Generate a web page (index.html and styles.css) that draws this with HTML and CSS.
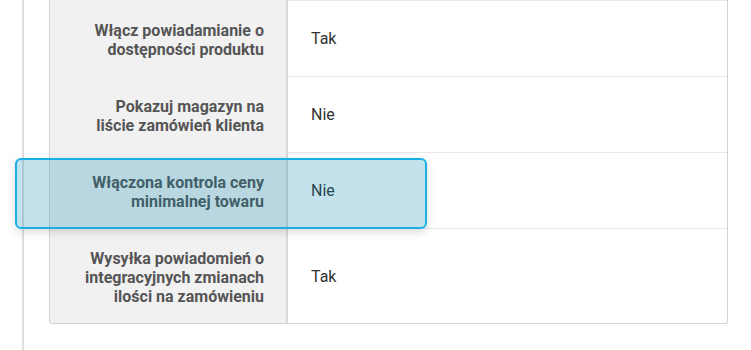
FILE: index.html
```html
<!DOCTYPE html>
<html lang="pl">

<head>
    <meta charset="UTF-8">
    <meta name="viewport" content="width=device-width, initial-scale=1.0">
    <title>Ustawienia sklepu</title>
    <link rel="stylesheet" href="styles.css">
</head>

<body>
    <div class="panel">
        <div class="settings">
            <div class="label">Włącz powiadamianie o dostępności produktu</div>
            <div class="value">Tak</div>

            <div class="label">Pokazuj magazyn na liście zamówień klienta</div>
            <div class="value">Nie</div>

            <div class="label">Włączona kontrola ceny minimalnej towaru</div>
            <div class="value">Nie</div>

            <div class="label">Wysyłka powiadomień o integracyjnych zmianach ilości na zamówieniu</div>
            <div class="value">Tak</div>
        </div>
    </div>
    <!-- podświetlenie wybranego wiersza -->
    <div class="highlight"></div>
</body>

</html>
```
FILE: styles.css
```css
* {
    margin: 0;
    padding: 0;
    box-sizing: border-box;
}

body {
    background: #fff;
    font-family: Roboto, "Liberation Sans", sans-serif;
    font-size: 16px;
}

.panel {
    margin-left: 22px;
    border-left: 2px solid #dedede;
    min-height: 100vh;
    padding-left: 25px;
}

.settings {
    width: 679px;
    display: grid;
    grid-template-columns: 238px 1fr;
    border: 1px solid #d4d4d4;
    border-top: none;
    border-radius: 0 0 3px 3px;
    overflow: hidden;
}

.label {
    background: #f1f1f1;
    border-right: 2px solid #d9d9d9;
    padding: 21px 22px 17px 28px;
    text-align: right;
    font-weight: bold;
    line-height: 19px;
    color: #555;
}

.value {
    display: flex;
    align-items: center;
    padding-left: 23px;
    border-top: 1px solid #e8e8e8;
    color: #333;
}

.highlight {
    position: absolute;
    left: 15px;
    top: 158px;
    width: 412px;
    height: 71px;
    border: 2px solid #1ab0e6;
    border-radius: 6px;
    background: rgba(0, 130, 170, 0.23);
    box-shadow: 0 3px 8px rgba(0, 0, 0, 0.15);
}
```
